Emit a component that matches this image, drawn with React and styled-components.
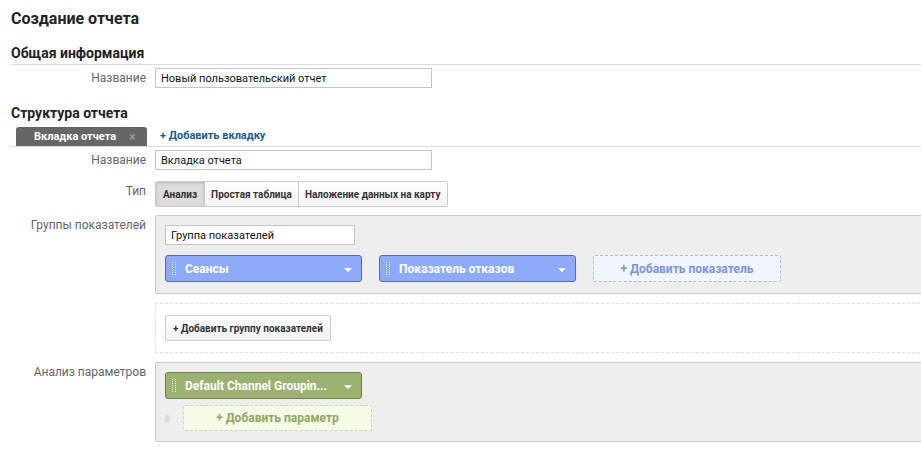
import React from "react";
import styled, { createGlobalStyle } from "styled-components";

const GlobalStyle = createGlobalStyle`
  body {
    margin: 0;
    background: #fff;
    font-family: Roboto, "Liberation Sans", Arial, sans-serif;
    color: #222;
    overflow: hidden;
  }
`;

const Page = styled.div`
  width: 940px;
  padding: 8px 0 0 11px;
  box-sizing: border-box;
`;

const PageTitle = styled.h1`
  margin: 0;
  font-size: 16px;
  line-height: 22px;
  font-weight: 700;
  color: #222;
`;

const SectionTitle = styled.h2`
  margin: ${(p) => p.$top ?? 15}px 0 0;
  font-size: 14px;
  line-height: 20px;
  font-weight: 700;
  color: #222;
  padding-bottom: ${(p) => (p.$line ? 1 : 0)}px;
  border-bottom: ${(p) => (p.$line ? "1px solid #ddd" : "none")};
`;

const Row = styled.div`
  display: flex;
  align-items: flex-start;
  margin-top: ${(p) => p.$top ?? 0}px;
`;

const Label = styled.div`
  width: 135px;
  padding-right: 9px;
  text-align: right;
  font-size: 12px;
  line-height: ${(p) => p.$lh ?? 20}px;
  color: #666;
  flex-shrink: 0;
`;

const Field = styled.div`
  flex: 1;
  min-width: 0;
`;

const TextInput = styled.input`
  display: block;
  width: ${(p) => p.$w ?? 277}px;
  height: 20px;
  box-sizing: border-box;
  border: 1px solid #c4c4c4;
  padding: 0 5px;
  font-family: inherit;
  font-size: 11px;
  color: #111;
  outline: none;
  background: #fff;
`;

const TabBar = styled.div`
  display: flex;
  align-items: flex-end;
  margin-top: 4px;
  border-bottom: 1px solid #ddd;
`;

const Tab = styled.div`
  margin-left: 5px;
  width: 131px;
  height: 19px;
  box-sizing: border-box;
  background: #666;
  border-radius: 3px 3px 0 0;
  color: #fff;
  font-size: 11px;
  font-weight: 700;
  display: flex;
  align-items: center;
  padding-left: 18px;
  gap: 13px;
`;

const TabClose = styled.span`
  color: #999;
  font-size: 12px;
  font-weight: 700;
`;

const AddTab = styled.a`
  margin-left: 13px;
  margin-bottom: 3px;
  font-size: 11px;
  font-weight: 700;
  color: #1b5c99;
  text-decoration: none;
  line-height: 14px;
`;

const Segments = styled.div`
  display: inline-flex;
  border: 1px solid #ccc;
  border-radius: 2px;
  overflow: hidden;
`;

const Segment = styled.div`
  height: 24px;
  padding: 0 ${(p) => p.$pad ?? 6}px;
  display: flex;
  align-items: center;
  font-size: 10px;
  font-weight: 700;
  color: #333;
  background: ${(p) => (p.$active ? "#dcdcdc" : "linear-gradient(#fff, #f4f4f4)")};
  box-shadow: ${(p) => (p.$active ? "inset 0 1px 3px rgba(0,0,0,0.18)" : "none")};
  & + & {
    border-left: 1px solid #ccc;
  }
`;

const Panel = styled.div`
  background: #eee;
  border: 1px solid #ccc;
  border-right: none;
  border-radius: 3px 0 0 3px;
  padding: 9px 9px;
  height: ${(p) => p.$h}px;
  box-sizing: border-box;
`;

const DashedBox = styled.div`
  margin-top: 9px;
  border: 1px dashed #ddd;
  border-right: none;
  height: 50px;
  box-sizing: border-box;
  padding: 11px 9px 0;
`;

const ChipRow = styled.div`
  display: flex;
  align-items: center;
  gap: ${(p) => p.$gap ?? 17}px;
  margin-top: ${(p) => p.$top ?? 0}px;
`;

const Chip = styled.div`
  width: 197px;
  height: 27px;
  box-sizing: border-box;
  border-radius: 3px;
  border: 1px solid ${(p) => (p.$green ? "#6d8049" : "#5b6aa3")};
  background: ${(p) => (p.$green ? "#9cb273" : "#8eabfb")};
  color: #fff;
  font-size: 12px;
  font-weight: 700;
  display: flex;
  align-items: center;
  padding: 0 8px 0 6px;
  white-space: nowrap;
`;

const ChipText = styled.span`
  flex: 1;
  margin-left: 9px;
  overflow: hidden;
  text-overflow: ellipsis;
`;

const Caret = styled.span`
  width: 0;
  height: 0;
  border-left: 4px solid transparent;
  border-right: 4px solid transparent;
  border-top: 4px solid #fff;
  margin-top: 2px;
  margin-right: 1px;
`;

const AddSlot = styled.div`
  width: ${(p) => p.$w ?? 188}px;
  height: ${(p) => p.$h ?? 27}px;
  box-sizing: border-box;
  border: 1px dashed ${(p) => (p.$green ? "#c7da9f" : "#a9b9ef")};
  background: ${(p) => (p.$green ? "#f4fbe7" : "#f1f5fe")};
  color: ${(p) => (p.$green ? "#8fa85f" : "#7b94e4")};
  border-radius: 2px;
  font-size: 12px;
  font-weight: 700;
  display: flex;
  align-items: center;
  justify-content: center;
`;

const GhostButton = styled.button`
  height: 26px;
  padding: 0 7px;
  border: 1px solid #ccc;
  border-radius: 2px;
  background: linear-gradient(#fff, #f3f3f3);
  font-family: inherit;
  font-size: 10px;
  font-weight: 700;
  color: #333;
`;

const Notch = styled.span`
  width: 5px;
  height: 9px;
  border-radius: 0 5px 5px 0;
  background: #ddd;
  margin-left: 0;
  margin-right: 13px;
`;

// two columns of tiny dots used as a drag handle
function Grip() {
  const dots = [];
  for (let y = 0; y < 13; y += 2) {
    dots.push(<rect key={`a${y}`} x="0" y={y} width="1" height="1" />);
    dots.push(<rect key={`b${y}`} x="3" y={y} width="1" height="1" />);
  }
  return (
    <svg width="4" height="13" fill="rgba(255,255,255,0.8)" style={{ flexShrink: 0 }}>
      {dots}
    </svg>
  );
}

export default function App() {
  return (
    <>
      <GlobalStyle />
      <Page>
        <PageTitle>Создание отчета</PageTitle>

        <SectionTitle $top={13} $line>
          Общая информация
        </SectionTitle>
        <Row $top={3}>
          <Label>Название</Label>
          <Field>
            <TextInput defaultValue="Новый пользовательский отчет" />
          </Field>
        </Row>

        <SectionTitle $top={15}>Структура отчета</SectionTitle>
        <TabBar>
          <Tab>
            Вкладка отчета <TabClose>×</TabClose>
          </Tab>
          <AddTab href="#">+ Добавить вкладку</AddTab>
        </TabBar>
        <Row $top={3}>
          <Label>Название</Label>
          <Field>
            <TextInput defaultValue="Вкладка отчета" />
          </Field>
        </Row>
        <Row $top={11}>
          <Label $lh={20}>Тип</Label>
          <Field>
            <Segments>
              <Segment $active $pad={7}>Анализ</Segment>
              <Segment>Простая таблица</Segment>
              <Segment>Наложение данных на карту</Segment>
            </Segments>
          </Field>
        </Row>

        <Row $top={8}>
          <Label>Группы показателей</Label>
          <Field>
            <Panel $h={79}>
              <TextInput $w={190} defaultValue="Группа показателей" />
              <ChipRow $top={10}>
                <Chip>
                  <Grip />
                  <ChipText>Сеансы</ChipText>
                  <Caret />
                </Chip>
                <Chip>
                  <Grip />
                  <ChipText>Показатель отказов</ChipText>
                  <Caret />
                </Chip>
                <AddSlot>+ Добавить показатель</AddSlot>
              </ChipRow>
            </Panel>
            <DashedBox>
              <GhostButton>+ Добавить группу показателей</GhostButton>
            </DashedBox>
          </Field>
        </Row>

        <Row $top={9}>
          <Label>Анализ параметров</Label>
          <Field>
            <Panel $h={80}>
              <Chip $green>
                <Grip />
                <ChipText>Default Channel Groupin...</ChipText>
                <Caret />
              </Chip>
              <ChipRow $gap={0} $top={6}>
                <Notch />
                <AddSlot $green $w={189} $h={26}>+ Добавить параметр</AddSlot>
              </ChipRow>
            </Panel>
          </Field>
        </Row>
      </Page>
    </>
  );
}
